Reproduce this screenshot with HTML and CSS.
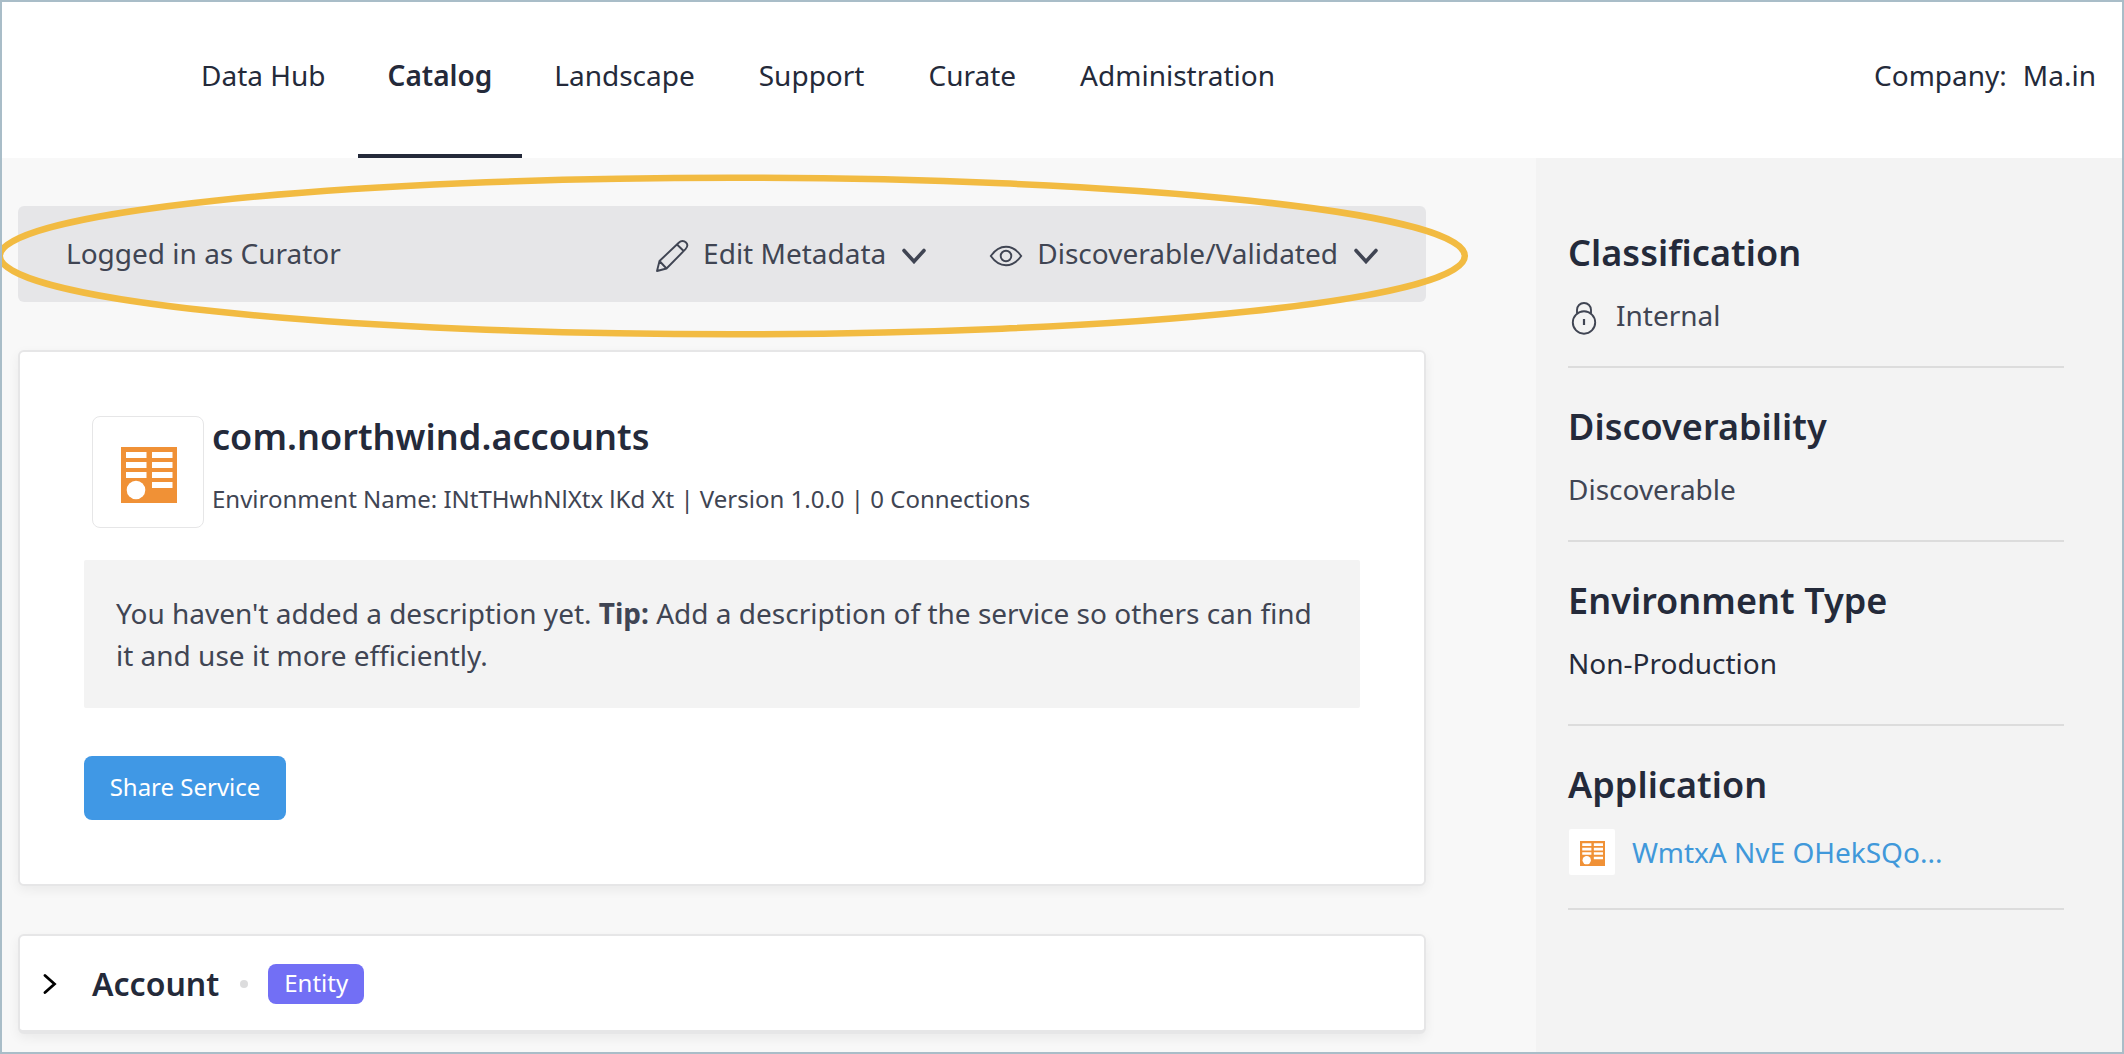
FILE: index.html
```html
<!DOCTYPE html>
<html lang="en">
<head>
<meta charset="utf-8">
<title>Catalog</title>
<link rel="stylesheet" href="styles.css">
</head>
<body>
<svg class="defs" width="0" height="0" aria-hidden="true">
  <symbol id="chevron" viewBox="0 0 24 16"><path d="M2 2.500 12 13.500 22 2.500" fill="none" stroke="currentColor" stroke-width="3.600" stroke-linecap="round"/></symbol>
  <symbol id="service" viewBox="0 0 56 56">
    <path fill="#f09136" d="M0 0h56v56H0z"/>
    <path fill="#fff" d="M5 5h20.500v6H5zM31 5h20.500v6H31zM5 15h20.500v6H5zM31 15h20.500v6H31zM5 25h20.500v6H5zM31 25h20.500v6H31zM31 35h20.500v6H31z"/>
    <circle cx="15" cy="43" r="9.300" fill="#fff"/>
  </symbol>
</svg>
<div class="app">
  <header class="header">
    <nav class="nav">
      <a class="tab">Data Hub</a>
      <a class="tab tab-active">Catalog</a>
      <a class="tab">Landscape</a>
      <a class="tab">Support</a>
      <a class="tab">Curate</a>
      <a class="tab">Administration</a>
    </nav>
    <div class="company"><span>Company:</span><span>Ma.in</span></div>
  </header>
  <div class="body">
    <main class="main">
      <section class="curator">
        <span class="role">Logged in as Curator</span>
        <div class="action edit">
          <svg class="pencil" width="34" height="34" viewBox="0 0 34 34" fill="none" stroke="currentColor" stroke-width="1.900" stroke-linejoin="round"><path d="M2 32 4.500 22 24 3.500C26 1.500 29 1.500 31 3.500S32.500 8 30.500 10.200L11.500 29.500ZM4.500 22 11.500 29.500M22 5.500 28.700 12"/></svg>
          <span>Edit Metadata</span>
          <svg class="chev" width="24" height="16"><use href="#chevron"/></svg>
        </div>
        <div class="action">
          <svg class="eye" width="34" height="22" viewBox="0 0 34 22" fill="none" stroke="currentColor" stroke-width="1.900"><path d="M1.800 11C6 5 11 1.800 17 1.800S28 5 32.200 11C28 17 23 20.200 17 20.200S6 17 1.800 11Z"/><circle cx="17" cy="11" r="5.300"/></svg>
          <span>Discoverable/Validated</span>
          <svg class="chev" width="24" height="16"><use href="#chevron"/></svg>
        </div>
      </section>
      <section class="card service">
        <div class="service-head">
          <div class="logo"><svg width="56" height="56"><use href="#service"/></svg></div>
          <div class="service-text">
            <h1>com.northwind.accounts</h1>
            <p class="meta">Environment Name: INtTHwhNlXtx lKd Xt | Version 1.0.0 | 0 Connections</p>
          </div>
        </div>
        <p class="tip">You haven't added a description yet. <b>Tip:</b> Add a description of the service so others can find it and use it more efficiently.</p>
        <button class="share">Share Service</button>
      </section>
      <section class="card entity">
        <svg width="14" height="20" viewBox="0 0 14 20" fill="none" stroke="#000" stroke-width="2.800" stroke-linecap="round"><path d="M2 1.500 11.500 10 2 18.500"/></svg>
        <h2>Account</h2>
        <i class="dot"></i>
        <span class="badge">Entity</span>
      </section>
      <svg class="highlight" width="1470" height="168" viewBox="0 0 1470 168"><ellipse cx="732.300" cy="84" rx="732.500" ry="78.200" fill="none" stroke="#f2bb42" stroke-width="6.500"/></svg>
    </main>
    <aside class="side">
      <section class="fact">
        <h3>Classification</h3>
        <div class="value"><svg class="lock" width="26" height="34" viewBox="0 0 26 34" fill="none" stroke="currentColor" stroke-width="1.900"><circle cx="13" cy="21.500" r="11.200"/><path d="M6 12.500V9C6 5 9 2 13 2S20 5 20 9V12.500"/><path d="M13 18v6" stroke-width="2.200"/></svg>Internal</div>
      </section>
      <section class="fact">
        <h3>Discoverability</h3>
        <div class="value">Discoverable</div>
      </section>
      <section class="fact fact-env">
        <h3>Environment Type</h3>
        <div class="value">Non-Production</div>
      </section>
      <section class="fact fact-app">
        <h3>Application</h3>
        <a class="value link"><span class="mini"><svg width="25" height="25"><use href="#service"/></svg></span>WmtxA NvE OHekSQo...</a>
      </section>
    </aside>
  </div>
</div>
</body>
</html>
```
FILE: styles.css
```css
* { box-sizing: border-box; margin: 0; }
body { font: 28px/42px "Noto Sans", sans-serif; color: #404553; }
svg { display: block; flex: none; }
.defs { position: absolute; }
.app { width: 2124px; height: 1054px; border: 2px solid #a9bdc8; display: flex; flex-direction: column; overflow: hidden; background: #f8f8f8; }
.header { height: 156px; flex: none; background: #fff; color: #242a3a; display: flex; justify-content: space-between; padding: 0 26px 0 167px; }
.nav { display: flex; }
.tab { padding: 52px 32px 0; height: 156px; white-space: nowrap; }
.tab-active { padding: 52px 30px 0; font-weight: 600; border-bottom: 4px solid #242a3a; }
.company { display: flex; gap: 16px; padding-top: 52px; }
.body { flex: 1; display: flex; min-height: 0; }
.main { position: relative; width: 1534px; padding: 48px 110px 0 16px; display: flex; flex-direction: column; gap: 48px; }
.curator { height: 96px; flex: none; background: #e6e6e8; border-radius: 6px; display: flex; align-items: center; padding: 0 48px 2px; }
.role { margin-right: auto; }
.action { display: flex; align-items: center; }
.edit { margin-right: 63px; }
.action > span { margin: 0 16px 0 14px; }
.pencil, .eye { margin-top: 6px; }
.chev { margin-top: 5px; }
.highlight { position: absolute; left: -2px; top: 14px; }
.card { background: #fff; border: 2px solid #e6e6e7; border-radius: 6px; box-shadow: 0 4px 12px rgba(0,0,0,.06); flex: none; }
.service { height: 536px; padding: 64px 64px 0; }
.service-head { display: flex; padding-left: 8px; }
.logo { width: 112px; height: 112px; border: 1px solid #e6e6e7; border-radius: 8px; display: grid; place-items: center; padding: 5px 0 0 1px; }
.service-text { margin-left: 8px; }
h1, h2, h3 { color: #242a3a; font-weight: 600; }
h1 { font-size: 36px; line-height: 42px; letter-spacing: .05px; }
.meta { font-size: 24px; line-height: 36px; margin-top: 23px; }
.tip { margin-top: 32px; height: 148px; background: #f3f3f3; border-radius: 2px; padding: 32px; }
.share { display: block; margin-top: 48px; width: 202px; height: 64px; border: 0; border-radius: 8px; background: #4098e5; color: #fff; font: 24px/36px "Noto Sans", sans-serif; padding: 0 0 2px; }
.entity { height: 100px; border-bottom-width: 4px; display: flex; align-items: center; padding: 2px 0 0 23px; }
h2 { font-size: 32px; margin-left: 35px; }
.dot { width: 8px; height: 8px; border-radius: 50%; background: #dcdcdd; margin: 0 20px 0 21px; }
.badge { width: 96px; height: 40px; border-radius: 8px; background: #726ff5; color: #fff; font-size: 24px; line-height: 38px; text-align: center; }
.side { flex: 1; background: #f3f3f3; padding: 48px 58px 0 32px; }
.fact { height: 162px; border-bottom: 2px solid #dcdcdc; margin-bottom: 12px; padding-top: 23px; }
.fact-env { height: 172px; }
h3 { font-size: 36px; line-height: 48px; letter-spacing: .05px; }
.value { display: flex; align-items: center; margin-top: 17px; height: 42px; }
.lock { margin: 6px 19px 0 3px; }
.fact-env .value { color: #242a3a; }
.fact-app { height: 172px; }
.link { color: #4098da; margin-top: 22px; }
.mini { width: 46px; height: 46px; background: #fff; display: grid; place-items: center; margin: 0 17px 0 1px; border-radius: 2px; padding: 2px 0 0 1px; }
```
